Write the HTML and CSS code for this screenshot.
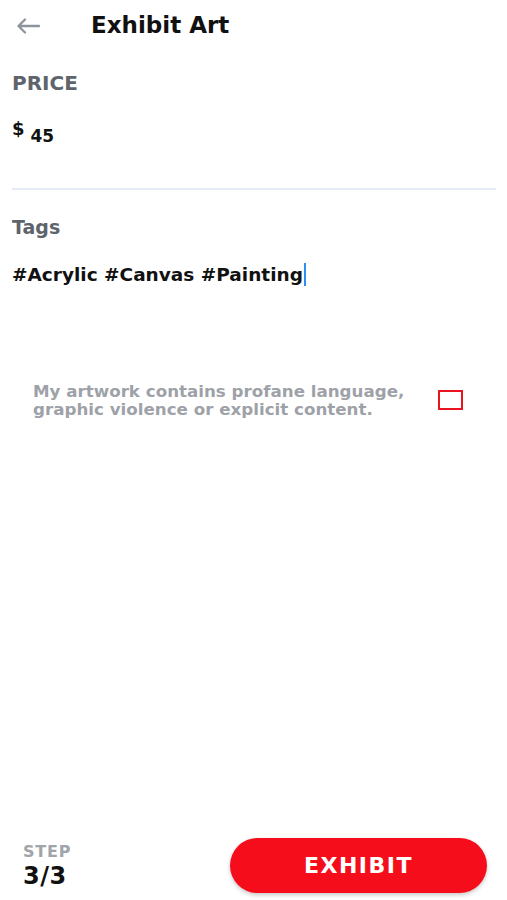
FILE: index.html
```html
<!DOCTYPE html>
<html>
<head>
<meta charset="utf-8">
<link rel="stylesheet" href="styles.css">
</head>
<body>
<div class="page">
  <header class="header">
    <svg class="back" width="24" height="16" viewBox="0 0 24 16" fill="none">
      <path d="M23 8H2.5 M9 1.5L2.5 8L9 14.5" stroke="#8e949b" stroke-width="2.3" stroke-linecap="round" stroke-linejoin="round"/>
    </svg>
    <h1 class="title">Exhibit Art</h1>
  </header>

  <section class="field">
    <div class="label price-label">PRICE</div>
    <div class="value"><span class="cur">$</span> <span class="amt">45</span></div>
  </section>
  <div class="divider"></div>

  <section class="field">
    <div class="label tags-label">Tags</div>
    <div class="tags">#Acrylic #Canvas #Painting<span class="caret"></span></div>
  </section>

  <div class="consent">
    <p class="consent-text">My artwork contains profane language, graphic violence or explicit content.</p>
    <span class="checkbox"></span>
  </div>

  <footer class="footer">
    <div class="step">
      <div class="step-label">STEP</div>
      <div class="step-num">3/3</div>
    </div>
    <button class="exhibit">EXHIBIT</button>
  </footer>
</div>
</body>
</html>
```

FILE: styles.css
```css
* { box-sizing: border-box; }
html, body { margin: 0; padding: 0; background: #fff; }
body {
  font-family: "DejaVu Sans", "Liberation Sans", sans-serif;
  font-weight: bold;
  color: #111;
}
.page {
  height: 900px;
  display: flex;
  flex-direction: column;
}
.header {
  height: 50px;
  display: flex;
  align-items: center;
  padding-left: 16px;
}
.back { display: block; margin-top: 2px; }
.title {
  margin: 0 0 0 51px;
  font-size: 23px;
  line-height: 24px;
  font-weight: bold;
  color: #111;
}
.field { padding: 0 12px; }
.label { color: #5e646c; }
.price-label {
  margin-top: 21px;
  font-size: 20px;
  line-height: 24px;
}
.value {
  margin-top: 29px;
  font-size: 17px;
  line-height: 24px;
}
.cur {
  font-size: 18px;
  line-height: 0;
  vertical-align: 7px;
}
.amt { font-size: 17px; }
.divider {
  margin: 40px 11px 0 12px;
  height: 2px;
  background: #e3ecf8;
}
.tags-label {
  margin-top: 25px;
  font-size: 19px;
  line-height: 24px;
}
.tags {
  margin-top: 22px;
  font-size: 18.5px;
  line-height: 28px;
  color: #111;
}
.caret {
  display: inline-block;
  width: 2px;
  height: 23px;
  background: #2f8cf0;
  vertical-align: -5px;
  margin-left: 1px;
}
.consent {
  margin-top: 93px;
  display: flex;
  align-items: center;
  padding: 0 44px 0 33px;
  gap: 10px;
}
.consent-text {
  margin: 0;
  flex: 1;
  font-size: 16.7px;
  line-height: 18px;
  color: #9ea2a8;
}
.checkbox {
  width: 25px;
  height: 20px;
  border: 2px solid #e8141f;
  flex: none;
}
.footer {
  margin-top: auto;
  display: flex;
  align-items: center;
  justify-content: space-between;
  padding: 0 20px 7px 23px;
}
.step-label {
  font-size: 16px;
  line-height: 18px;
  color: #a0a5ab;
  letter-spacing: 0.8px;
}
.step-num {
  margin-top: 3px;
  font-size: 24px;
  line-height: 24px;
  color: #111;
  letter-spacing: 0.5px;
}
.exhibit {
  width: 257px;
  height: 55px;
  border: none;
  border-radius: 28px;
  background: #f60d1b;
  color: #fff;
  font-family: "DejaVu Sans", "Liberation Sans", sans-serif;
  font-weight: bold;
  font-size: 22px;
  letter-spacing: 1.5px;
  box-shadow: 0 2px 4px rgba(0,0,0,0.22);
  padding: 0;
}
```
